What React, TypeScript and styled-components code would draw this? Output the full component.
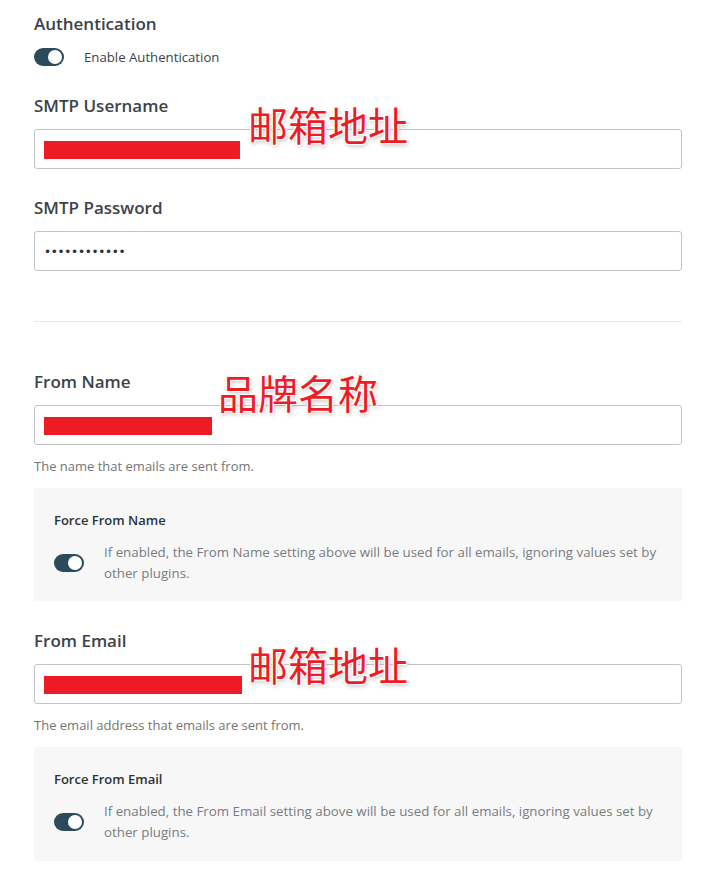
import React from "react";
import styled, { createGlobalStyle } from "styled-components";

const GlobalStyle = createGlobalStyle`
  html, body { margin: 0; padding: 0; background: #ffffff; }
  body { font-family: "Open Sans", "Noto Sans", Arial, sans-serif; color: #3c434a; }
  * { box-sizing: border-box; }
`;

const Page = styled.div`
  width: 716px;
  padding: 12px 34px 0 34px;
  display: flex;
  flex-direction: column;
`;

const Heading = styled.div<{ $mt?: number }>`
  font-size: 17px;
  font-weight: 600;
  line-height: 24px;
  color: #3c434a;
  margin-top: ${(p) => p.$mt ?? 0}px;
`;

const ToggleRow = styled.div<{ $mt?: number; $gap?: number }>`
  display: flex;
  align-items: center;
  gap: ${(p) => p.$gap ?? 20}px;
  margin-top: ${(p) => p.$mt ?? 0}px;
`;

const Track = styled.span`
  flex: none;
  position: relative;
  width: 30px;
  height: 18px;
  border-radius: 9px;
  background: #2b4b5c;
  display: inline-block;
`;

const Knob = styled.span`
  position: absolute;
  top: 2px;
  right: 2px;
  width: 14px;
  height: 14px;
  border-radius: 50%;
  background: #ffffff;
`;

const ToggleLabel = styled.span`
  font-size: 13.2px;
  line-height: 18px;
  color: #3c434a;
`;

const Field = styled.div`
  position: relative;
  margin-top: 11px;
`;

const InputShell = styled.div`
  height: 40px;
  border: 1px solid #c3c4c7;
  border-radius: 3px;
  background: #fff;
  display: flex;
  align-items: center;
  padding: 0 9px;
`;

const Redaction = styled.span<{ $w: number }>`
  display: block;
  width: ${(p) => p.$w}px;
  height: 18px;
  background: #ed1c24;
  margin-top: 2px;
`;

const PasswordInput = styled.input`
  border: none;
  outline: none;
  background: transparent;
  width: 100%;
  font-family: "DejaVu Sans", sans-serif;
  font-size: 12px;
  letter-spacing: -0.3px;
  color: #2c3338;
  padding: 0;
  margin-top: 2px;
`;

const Annotation = styled.span<{ $left: number; $top: number }>`
  position: absolute;
  left: ${(p) => p.$left}px;
  top: ${(p) => p.$top}px;
  font-family: "Noto Sans CJK SC", "Noto Sans", sans-serif;
  font-size: 40px;
  font-weight: 400;
  line-height: 40px;
  color: #ee1c25;
  white-space: nowrap;
  text-shadow:
    -1px -1px 0 #fff, 1px -1px 0 #fff, -1px 1px 0 #fff, 1px 1px 0 #fff,
    0 0 3px #fff, 1px 2px 4px rgba(0, 0, 0, 0.3);
`;

const Divider = styled.hr`
  border: none;
  height: 1px;
  background: #e8e8e8;
  margin: 50px 0 0 0;
`;

const Help = styled.div`
  margin-top: 12px;
  font-size: 13px;
  line-height: 18px;
  color: #757575;
`;

const OptionBox = styled.div<{ $pb?: number }>`
  margin-top: 13px;
  background: #f7f7f7;
  padding: 22px 20px ${(p) => p.$pb ?? 17}px 20px;
  display: flex;
  flex-direction: column;
`;

const OptionTitle = styled.div`
  font-size: 13px;
  font-weight: 600;
  line-height: 20px;
  color: #2c3338;
`;

const OptionText = styled.div`
  font-size: 13.3px;
  line-height: 21px;
  color: #787c82;
  font-weight: 400;
`;

const Toggle: React.FC = () => (
  <Track>
    <Knob />
  </Track>
);

export default function App() {
  return (
    <>
      <GlobalStyle />
      <Page>
        <Heading>Authentication</Heading>
        <ToggleRow $mt={12}>
          <Toggle />
          <ToggleLabel>Enable Authentication</ToggleLabel>
        </ToggleRow>

        <Heading $mt={28}>SMTP Username</Heading>
        <Field>
          <InputShell>
            <Redaction $w={196} />
          </InputShell>
          <Annotation $left={214} $top={-25}>邮箱地址</Annotation>
        </Field>

        <Heading $mt={27}>SMTP Password</Heading>
        <Field>
          <InputShell>
            <PasswordInput type="password" readOnly defaultValue="smtppassword" />
          </InputShell>
        </Field>

        <Divider />

        <Heading $mt={48}>From Name</Heading>
        <Field>
          <InputShell>
            <Redaction $w={168} />
          </InputShell>
          <Annotation $left={184} $top={-33}>品牌名称</Annotation>
        </Field>
        <Help>The name that emails are sent from.</Help>
        <OptionBox>
          <OptionTitle>Force From Name</OptionTitle>
          <ToggleRow $mt={12} $gap={20}>
            <Toggle />
            <OptionText>
              If enabled, the From Name setting above will be used for all emails, ignoring values set by
              other plugins.
            </OptionText>
          </ToggleRow>
        </OptionBox>

        <Heading $mt={28}>From Email</Heading>
        <Field>
          <InputShell>
            <Redaction $w={198} />
          </InputShell>
          <Annotation $left={214} $top={-20}>邮箱地址</Annotation>
        </Field>
        <Help>The email address that emails are sent from.</Help>
        <OptionBox $pb={18}>
          <OptionTitle>Force From Email</OptionTitle>
          <ToggleRow $mt={12} $gap={20}>
            <Toggle />
            <OptionText>
              If enabled, the From Email setting above will be used for all emails, ignoring values set by
              other plugins.
            </OptionText>
          </ToggleRow>
        </OptionBox>
      </Page>
    </>
  );
}
